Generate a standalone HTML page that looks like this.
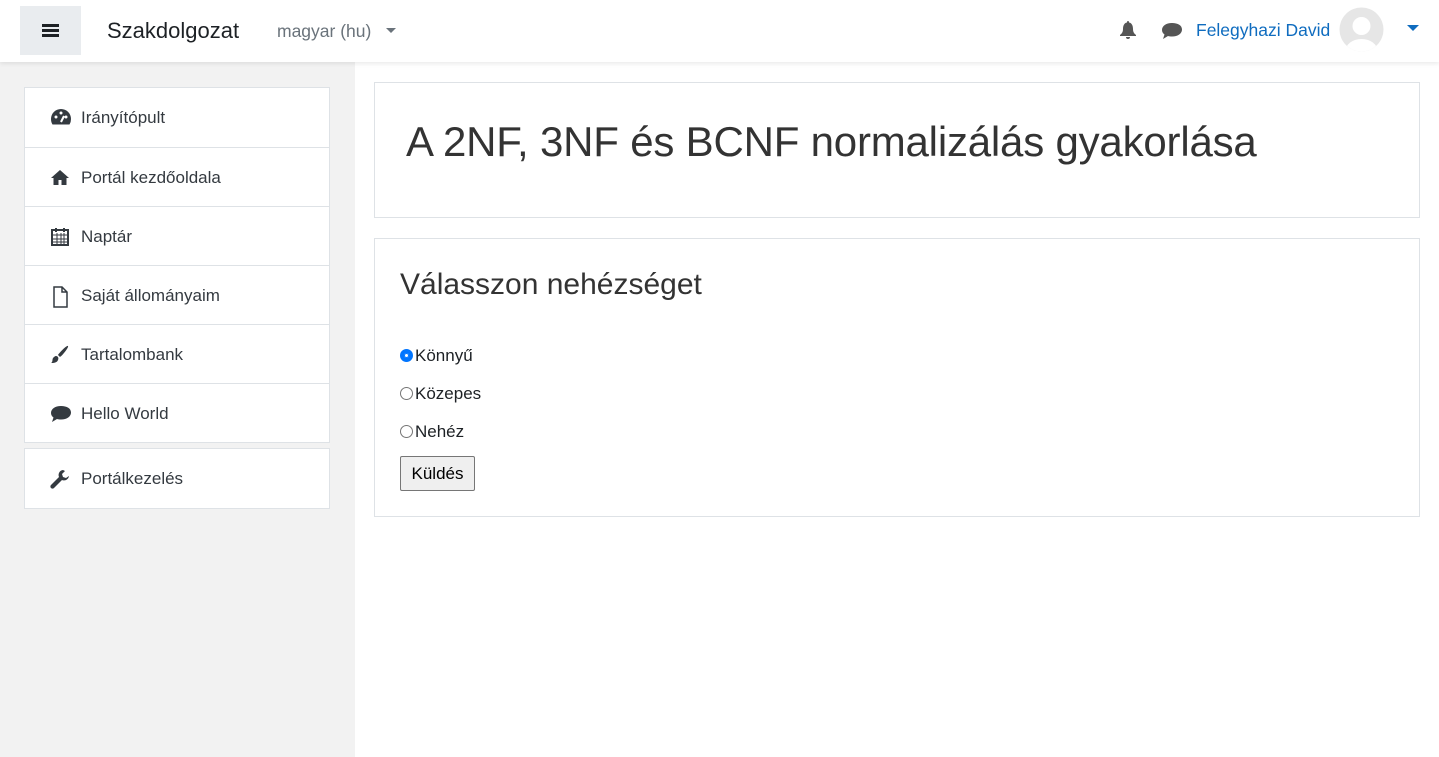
<!DOCTYPE html>
<html><head><meta charset="utf-8"><style>
*{box-sizing:border-box;margin:0;padding:0}
body{width:1439px;height:757px;overflow:hidden;font-family:"Liberation Sans",sans-serif;background:#fff;position:relative;color:#343a40}
.hdr{position:absolute;left:0;top:0;width:1439px;height:62px;background:#fff;box-shadow:0 2px 4px rgba(0,0,0,.08);z-index:2}
.burger{position:absolute;left:20px;top:6px;width:61px;height:49px;background:#e9ecef}
.burger i{position:absolute;left:22px;width:17px;height:3px;background:#1d2125}
.side{position:absolute;left:0;top:62px;width:355px;height:695px;background:#f2f2f2}
.nav{position:absolute;left:24px;width:306px;background:#fff;border:1px solid #dee2e6}
.nav div{height:59px;border-top:1px solid #dee2e6;position:relative;font-size:17px;line-height:59px;padding-left:56px;color:#343a40}
.nav div:first-child{border-top:0}
.nav svg{position:absolute;left:25px;top:20px}
.card{position:absolute;left:374px;width:1046px;background:#fff;border:1px solid #dee2e6}
.r{position:absolute;left:400px;font-size:17px;color:#1d2125}
.r span{display:inline-block;width:13px;height:13px;border-radius:50%;border:1px solid #767676;vertical-align:-1px;margin-right:2px}
</style></head><body>
<div class="hdr">
<div class="burger"><i style="top:18px"></i><i style="top:23px"></i><i style="top:28px"></i></div>
<div style="position:absolute;left:107px;top:18px;font-size:22px;color:#1d2125">Szakdolgozat</div>
<div style="position:absolute;left:277px;top:21px;font-size:17.5px;color:#6a737b">magyar (hu)</div>
<div style="position:absolute;left:386px;top:28px;border:5px solid transparent;border-top:5px solid #6a737b"></div>
<svg style="position:absolute;left:1119px;top:20px" width="18" height="20" viewBox="0 0 18 20"><path d="M9 1c1 0 1 1 1 1.5C13 3 14 6 14 9c0 4 2 5 3 6v1H1v-1c1-1 3-2 3-6 0-3 1-6 4-6.5C8 2 8 1 9 1zM7 17h4a2 2 0 0 1-4 0z" fill="#555"/></svg>
<svg style="position:absolute;left:1161px;top:22px" width="22" height="18" viewBox="0 0 22 18"><path d="M11 1C5 1 1 4 1 8c0 2 1 3.5 2.5 4.5L2 17l5-3c1 .3 2.5.5 4 .5 6 0 10-3 10-7S17 1 11 1z" fill="#555"/></svg>
<div style="position:absolute;left:1196px;top:20px;font-size:17.5px;color:#0f6cbf">Felegyhazi David</div>
<svg style="position:absolute;left:1339px;top:7px" width="45" height="45" viewBox="0 0 45 45"><clipPath id="c"><circle cx="22.5" cy="22.5" r="22"/></clipPath><circle cx="22.5" cy="22.5" r="22" fill="#e6e6e6"/><g clip-path="url(#c)" fill="#fff"><circle cx="22.5" cy="19" r="9"/><ellipse cx="22.5" cy="44" rx="16" ry="12"/></g></svg>
<div style="position:absolute;left:1407px;top:25px;border:6px solid transparent;border-top:6px solid #0f6cbf"></div>
</div>
<div class="side">
<div class="nav" style="top:25px">
<div><svg width="22" height="18" viewBox="0 0 22 18"><path d="M11 1A10 10 0 0 0 1 11c0 2 .5 4 1.5 5.5h17A10 10 0 0 0 21 11 10 10 0 0 0 11 1z" fill="#343a40"/><circle cx="6" cy="9" r="1.5" fill="#fff"/><circle cx="11" cy="5" r="1.5" fill="#fff"/><circle cx="16" cy="9" r="1.5" fill="#fff"/><path d="M11 14l3-6" stroke="#fff" stroke-width="2"/></svg>Irányítópult</div>
<div><svg width="20" height="18" viewBox="0 0 20 18"><path d="M10 2L1 10h2.5v7h5v-5h3v5h5v-7H19z" fill="#343a40"/></svg>Portál kezdőoldala</div>
<div><svg width="20" height="20" viewBox="0 0 20 20"><rect x="2" y="3" width="16" height="15" fill="none" stroke="#343a40" stroke-width="2"/><path d="M2 8h16M2 12h16M2 15h16M7 6v12M11 6v12M14 6v12" stroke="#343a40"/><rect x="5" y="1" width="2" height="4" fill="#343a40"/><rect x="13" y="1" width="2" height="4" fill="#343a40"/></svg>Naptár</div>
<div><svg width="20" height="22" viewBox="0 0 20 22"><path d="M4 1h8l5 5v15H4z M12 1v5h5" fill="none" stroke="#343a40" stroke-width="1.5"/></svg>Saját állományaim</div>
<div><svg width="20" height="20" viewBox="0 0 20 20"><path d="M18 1c1 1-5 9-8 11l-2-2C10 7 17 0 18 1zM6 11c2 0 3 2 2 4-1 3-5 3-7 3 2-1 1-3 2-5 1-1 2-2 3-2z" fill="#343a40"/></svg>Tartalombank</div>
<div><svg width="22" height="20" viewBox="0 0 22 20"><path d="M11 2C5 2 1 5 1 9c0 2 1 3.5 2.5 4.5L2 18l5-3c1 .3 2.5.5 4 .5 6 0 10-3 10-7S17 2 11 2z" fill="#343a40"/></svg>Hello World</div>
</div>
<div class="nav" style="top:386px"><div><svg width="20" height="20" viewBox="0 0 20 20"><path d="M13 1a5 5 0 0 0-4 7L1 16a2 2 0 0 0 3 3l8-8a5 5 0 0 0 7-4l-3 2-3-1-1-3 3-3z" fill="#343a40"/></svg>Portálkezelés</div></div>
</div>
<div class="card" style="top:82px;height:136px"></div>
<div style="position:absolute;left:406px;top:118px;font-size:42px;color:#333;letter-spacing:-.2px">A 2NF, 3NF és BCNF normalizálás gyakorlása</div>
<div class="card" style="top:238px;height:279px"></div>
<div style="position:absolute;left:400px;top:268px;font-size:30px;color:#333">Válasszon nehézséget</div>
<div class="r" style="top:346px"><span style="border:4px solid #0075ff;background:#fff;box-shadow:0 0 0 1px #0075ff inset"></span>Könnyű</div>
<div class="r" style="top:384px"><span></span>Közepes</div>
<div class="r" style="top:422px"><span></span>Nehéz</div>
<div style="position:absolute;left:400px;top:456px;width:75px;height:35px;border:1px solid #767676;border-radius:2px;background:#efefef;font-size:17px;line-height:33px;text-align:center;color:#000">Küldés</div>
</body></html>
